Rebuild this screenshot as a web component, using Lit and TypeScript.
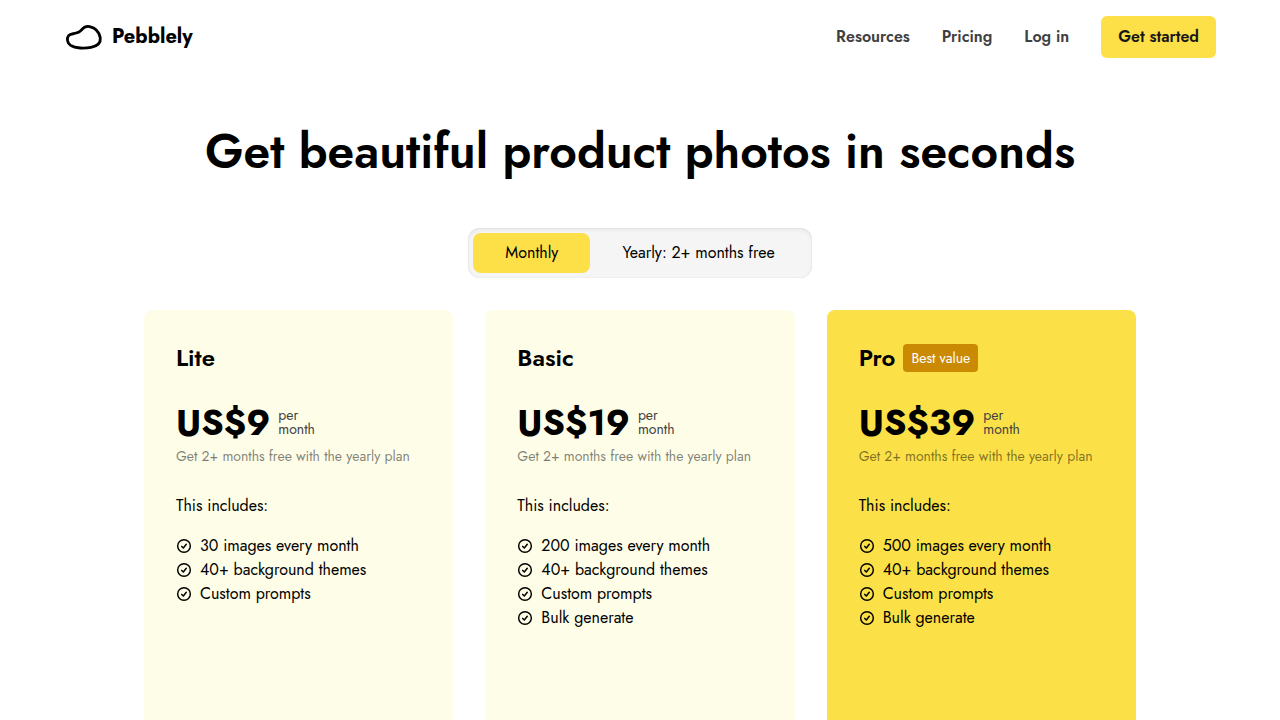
import { LitElement, html, css, nothing } from "lit";
import { customElement, property, state } from "lit/decorators.js";

interface Plan {
  name: string;
  price: number;
  features: string[];
  best?: boolean;
}

const PLANS: Plan[] = [
  {
    name: "Lite",
    price: 9,
    features: ["30 images every month", "40+ background themes", "Custom prompts"],
  },
  {
    name: "Basic",
    price: 19,
    features: ["200 images every month", "40+ background themes", "Custom prompts", "Bulk generate"],
  },
  {
    name: "Pro",
    price: 39,
    features: ["500 images every month", "40+ background themes", "Custom prompts", "Bulk generate"],
    best: true,
  },
];

@customElement("plan-card")
export class PlanCard extends LitElement {
  @property({ attribute: false }) plan!: Plan;

  static styles = css`
    :host {
      display: block;
      box-sizing: border-box;
      min-height: 480px;
      padding: 32px;
      border-radius: 8px;
      background: #fefde8;
      color: #000;
    }
    :host([featured]) {
      background: #fbe147;
    }
    .head {
      display: flex;
      align-items: center;
      gap: 8px;
      height: 32px;
    }
    .name {
      margin: 0;
      font-size: 24px;
      line-height: 32px;
      font-weight: 600;
    }
    .badge {
      padding: 4px 8px;
      border-radius: 4px;
      background: #ca8a04;
      color: #fff;
      font-size: 14px;
      line-height: 20px;
    }
    .price {
      display: flex;
      align-items: center;
      gap: 8px;
      margin-top: 28px;
    }
    .amount {
      font-size: 36px;
      line-height: 40px;
      font-weight: 700;
    }
    .period {
      width: 40px;
      font-size: 14px;
      line-height: 14px;
      color: #404040;
    }
    .note {
      margin: 4px 0 0;
      font-size: 14px;
      line-height: 20px;
      color: rgba(0, 0, 0, 0.5);
    }
    .includes {
      margin: 28px 0 0;
      font-size: 16px;
      line-height: 24px;
    }
    .features {
      margin: 16px 0 0;
      padding: 0;
      list-style: none;
    }
    .feature {
      display: flex;
      align-items: center;
      gap: 8px;
      font-size: 16px;
      line-height: 24px;
    }
    .tick {
      flex: none;
      width: 16px;
      height: 16px;
    }
  `;

  render() {
    const { name, price, features, best } = this.plan;
    return html`
      <div class="head">
        <h2 class="name">${name}</h2>
        ${best ? html`<span class="badge">Best value</span>` : nothing}
      </div>
      <div class="price">
        <span class="amount">US$${price}</span>
        <span class="period">per month</span>
      </div>
      <p class="note">Get 2+ months free with the yearly plan</p>
      <p class="includes">This includes:</p>
      <ul class="features">
        ${features.map(
          (f) => html`
            <li class="feature">
              <svg
                class="tick"
                viewBox="0 0 24 24"
                fill="none"
                stroke="currentColor"
                stroke-width="2.2"
                stroke-linecap="round"
                stroke-linejoin="round"
                aria-hidden="true"
              >
                <circle cx="12" cy="12" r="9.5" />
                <path d="M8.6 12.6l2.4 2.4 4.4-5.6" />
              </svg>
              <span>${f}</span>
            </li>
          `
        )}
      </ul>
    `;
  }
}

@customElement("app-root")
export class AppRoot extends LitElement {
  @state() private yearly = false;

  static styles = css`
    :host {
      display: block;
      height: 100vh;
      overflow: hidden;
      background: #fff;
      color: #000;
      font-family: Jost, Lato, sans-serif;
    }
    .header {
      display: flex;
      align-items: center;
      justify-content: space-between;
      padding: 16px 64px;
    }
    .brand {
      display: flex;
      align-items: center;
      gap: 8px;
      color: #000;
      text-decoration: none;
      font-size: 20px;
      line-height: 28px;
      font-weight: 700;
    }
    .logo {
      width: 40px;
      height: 28px;
    }
    .nav {
      display: flex;
      align-items: center;
      gap: 32px;
    }
    .link {
      color: #404040;
      text-decoration: none;
      font-size: 16px;
      line-height: 24px;
      font-weight: 600;
    }
    .cta {
      padding: 9px 17px;
      border-radius: 6px;
      background: #fde047;
      color: #171717;
    }
    .main {
      max-width: 992px;
      margin: 0 auto;
      padding: 38px 16px 0;
    }
    .title {
      margin: 0;
      font-size: 48px;
      line-height: 80px;
      font-weight: 600;
      text-align: center;
    }
    .toggle {
      display: flex;
      width: fit-content;
      margin: 36px auto 32px;
      padding: 5px;
      border-radius: 12px;
      background: #f5f5f5;
      box-shadow: inset 0 2px 4px rgba(0, 0, 0, 0.06), inset 0 0 1px rgba(0, 0, 0, 0.2);
    }
    .option {
      padding: 8px 32px;
      border: 0;
      border-radius: 8px;
      background: transparent;
      color: #000;
      font-family: inherit;
      font-size: 16px;
      line-height: 24px;
      cursor: pointer;
    }
    .option[aria-pressed="true"] {
      background: #fde047;
    }
    .plans {
      display: grid;
      grid-template-columns: repeat(3, minmax(0, 1fr));
      gap: 32px;
    }
  `;

  render() {
    return html`
      <header class="header">
        <a class="brand" href="#">
          <svg class="logo" viewBox="0 0 40 28" fill="none" stroke="#000" stroke-width="2.8" aria-hidden="true">
            <path
              d="M9.5 10.7C13 10.1 15.5 9.6 17.3 7.2C19.3 4.6 21.8 2.8 25.6 3.6C31.2 4.8 35.3 9.2 36.3 14.8C37 20.7 32.5 23.2 27 24.3C20.5 25.6 11.4 25.5 6.7 22.4C3.3 20 2.4 15.4 4.6 12.7C5.8 11.2 7.6 11 9.5 10.7Z"
            />
          </svg>
          <span>Pebblely</span>
        </a>
        <nav class="nav">
          <a class="link" href="#">Resources</a>
          <a class="link" href="#">Pricing</a>
          <a class="link" href="#">Log in</a>
          <a class="link cta" href="#">Get started</a>
        </nav>
      </header>
      <main class="main">
        <h1 class="title">Get beautiful product photos in seconds</h1>
        <div class="toggle" role="group" aria-label="Billing period">
          <button class="option" aria-pressed=${!this.yearly} @click=${() => (this.yearly = false)}>Monthly</button>
          <button class="option" aria-pressed=${this.yearly} @click=${() => (this.yearly = true)}>
            Yearly: 2+ months free
          </button>
        </div>
        <div class="plans">
          ${PLANS.map((p) => html`<plan-card .plan=${p} ?featured=${!!p.best}></plan-card>`)}
        </div>
      </main>
    `;
  }
}
